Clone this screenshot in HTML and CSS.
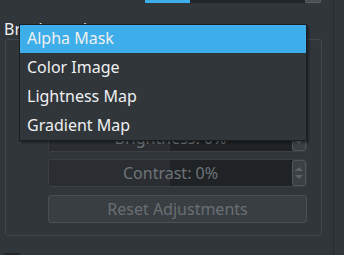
FILE: index.html
```html
<!DOCTYPE html>
<html lang="en">
<head>
    <meta charset="UTF-8">
    <meta name="viewport" content="width=device-width, initial-scale=1.0">
    <title>Brush Tip</title>
    <link rel="stylesheet" href="styles.css">
</head>
<body>
    <div class="page">
        <div class="main">
            <!-- Size slider, scrolled mostly out of view -->
            <div class="top-slider">
                <div class="slider-fill"></div>
                <div class="slider-track"></div>
                <div class="slider-handle"></div>
            </div>

            <div class="mode-label">Brush mode:</div>

            <div class="group">
                <div class="spinbox">
                    <div class="spin-fill"></div>
                    <span class="spin-text">Brightness: 0%</span>
                    <div class="spin-arrows">
                        <span class="arrow-up"></span>
                        <span class="arrow-down"></span>
                    </div>
                </div>
                <div class="spinbox">
                    <div class="spin-fill"></div>
                    <span class="spin-text">Contrast: 0%</span>
                    <div class="spin-arrows">
                        <span class="arrow-up"></span>
                        <span class="arrow-down"></span>
                    </div>
                </div>
                <button class="reset-btn" disabled>Reset Adjustments</button>
            </div>

            <div class="checkbox"></div>
        </div>
        <div class="side"></div>

        <!-- Open combo box popup -->
        <ul class="popup">
            <li class="item selected">Alpha Mask</li>
            <li class="item">Color Image</li>
            <li class="item">Lightness Map</li>
            <li class="item">Gradient Map</li>
        </ul>
    </div>
</body>
</html>
```

FILE: styles.css
```css
body {
    margin: 0;
    padding: 0;
    background-color: #31363b;
    font-family: "Noto Sans", "DejaVu Sans", sans-serif;
    font-size: 16px;
    color: #eff0f1;
    overflow: hidden;
}
.page {
    position: relative;
    display: flex;
    width: 344px;
    height: 255px;
    overflow: hidden;
}
.main {
    width: 333px;
    border-right: 1px solid #272b2f;
}
.side {
    flex: 1;
}
.top-slider {
    display: flex;
    margin-left: 145px;
    width: 176px;
    height: 3px;
}
.slider-fill {
    width: 45px;
    background-color: #3daee9;
}
.slider-track {
    flex: 1;
    background-color: #232629;
}
.slider-handle {
    width: 14px;
    background-color: #4a4f54;
    border: 1px solid #5b6065;
    border-top: none;
    border-radius: 0 0 2px 2px;
}
.mode-label {
    margin-top: 16px;
    padding-left: 4px;
    line-height: 20px;
    height: 20px;
}
.group {
    margin: 0 0 0 5px;
    height: 197px;
    box-sizing: border-box;
    width: 317px;
    border: 1px solid #41474d;
    border-radius: 3px;
    padding: 84px 14px 0 42px;
    display: flex;
    flex-direction: column;
}
.spinbox {
    position: relative;
    display: flex;
    align-items: center;
    height: 28px;
    box-sizing: border-box;
    border: 1px solid #3b4045;
    border-radius: 3px;
    background-color: #1f2326;
    margin-bottom: 7px;
    overflow: hidden;
}
.spinbox + .spinbox {
    margin-bottom: 8px;
}
.spin-fill {
    position: absolute;
    left: 0;
    top: 0;
    bottom: 0;
    width: 121px;
    background-color: #2a2e32;
}
.spin-text {
    position: relative;
    flex: 1;
    text-align: center;
    color: #6e7378;
    line-height: 26px;
}
.spin-arrows {
    position: relative;
    width: 14px;
    height: 26px;
    box-sizing: border-box;
    background-color: #3b4045;
    border: 1px solid #50555a;
    border-radius: 2px;
    display: flex;
    flex-direction: column;
    align-items: center;
    justify-content: center;
    gap: 4px;
}
.arrow-up {
    width: 0;
    height: 0;
    border-left: 4px solid transparent;
    border-right: 4px solid transparent;
    border-bottom: 4px solid #5d6267;
}
.arrow-down {
    width: 0;
    height: 0;
    border-left: 4px solid transparent;
    border-right: 4px solid transparent;
    border-top: 4px solid #5d6267;
}
.reset-btn {
    height: 28px;
    box-sizing: border-box;
    font-family: inherit;
    font-size: 16px;
    color: #696e73;
    background-color: #393e43;
    border: 1px solid #4a4f54;
    border-radius: 3px;
    padding: 0;
}
.checkbox {
    margin: 17px 0 0 4px;
    width: 16px;
    height: 16px;
    background-color: #232629;
    border-radius: 2px;
}
.popup {
    position: absolute;
    left: 19px;
    top: 24px;
    width: 288px;
    box-sizing: border-box;
    margin: 0;
    padding: 0;
    list-style: none;
    background-color: #31363b;
    border: 1px solid #1b1e20;
    box-shadow: 2px 2px 2px rgba(0, 0, 0, 0.35);
}
.item {
    height: 28px;
    line-height: 26px;
    padding: 0 0 2px 7px;
    box-sizing: border-box;
    margin-bottom: 1px;
}
.item:last-child {
    margin-bottom: 0;
}
.item.selected {
    background-color: #3daee9;
}
```
